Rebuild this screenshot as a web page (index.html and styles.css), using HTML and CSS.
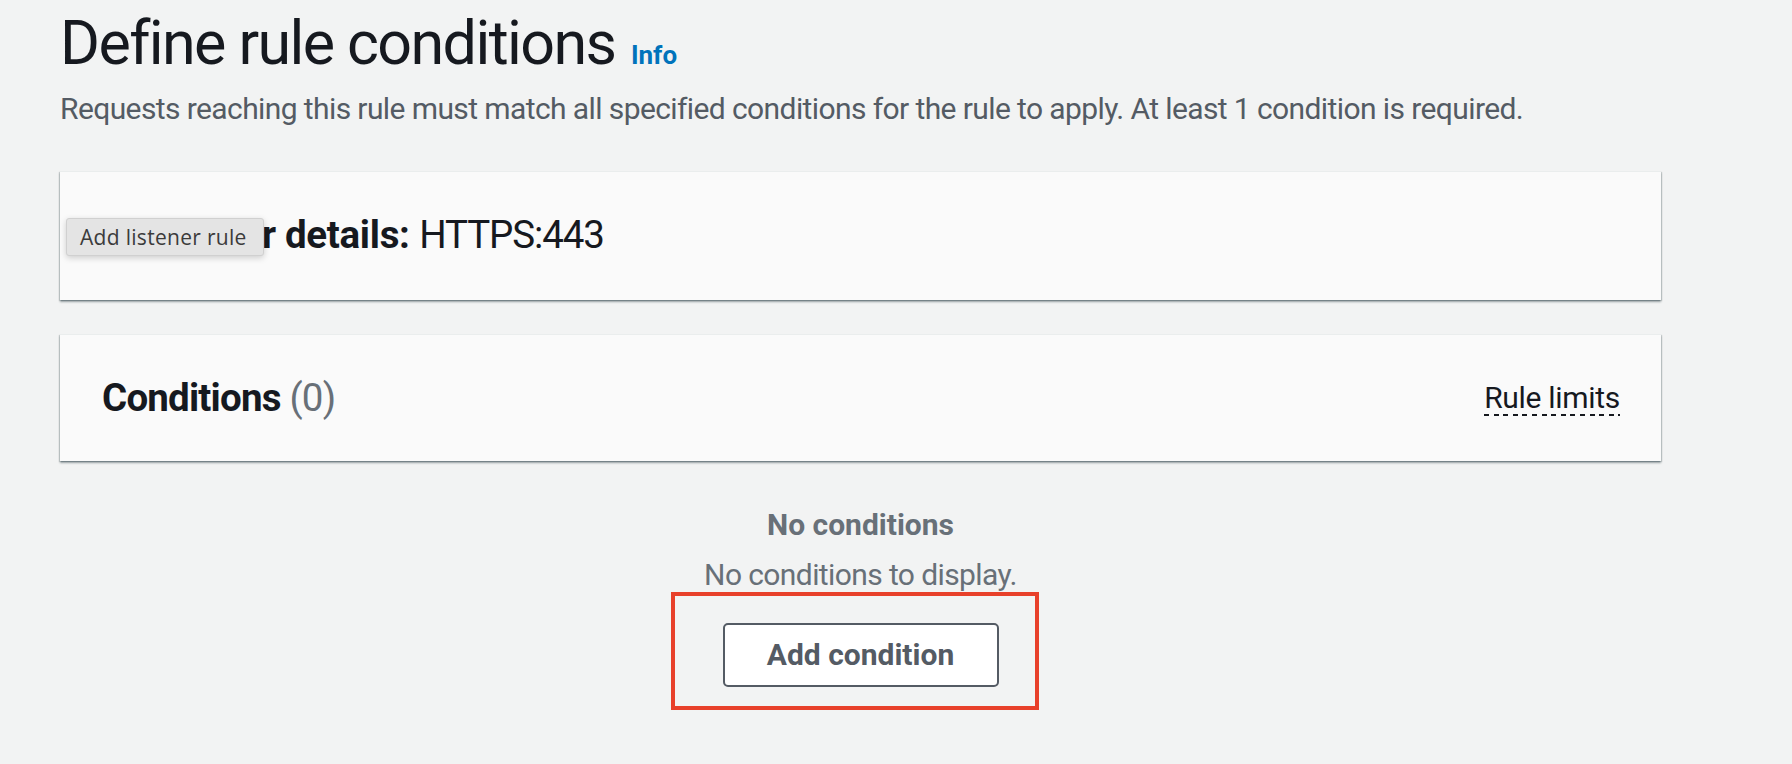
FILE: index.html
```html
<!DOCTYPE html>
<html lang="en">
<head>
<meta charset="utf-8">
<title>Define rule conditions</title>
<link rel="stylesheet" href="styles.css">
</head>
<body>
<main class="page">
  <header class="page-header">
    <h1 class="page-title">Define rule conditions <a class="info-link" href="#">Info</a></h1>
    <p class="page-desc">Requests reaching this rule must match all specified conditions for the rule to apply. At least 1 condition is required.</p>
  </header>

  <section class="card card-listener">
    <h2 class="card-title listener-title"><strong>Listener details:</strong> <span class="value">HTTPS:443</span></h2>
    <div class="tooltip">Add listener rule</div>
  </section>

  <section class="card card-conditions">
    <h2 class="card-title conditions-title"><strong>Conditions</strong> <span class="count">(0)</span></h2>
    <a class="rule-limits" href="#">Rule limits</a>
  </section>

  <div class="empty">
    <div class="empty-title">No conditions</div>
    <div class="empty-text">No conditions to display.</div>
    <div class="empty-action">
      <button class="btn" type="button">Add condition</button>
      <div class="highlight"></div>
    </div>
  </div>
</main>
</body>
</html>
```

FILE: styles.css
```css
* { box-sizing: border-box; }

html, body {
  margin: 0;
  padding: 0;
  background: #f2f3f3;
}

body {
  font-family: Roboto, "Liberation Sans", sans-serif;
  color: #16191f;
  min-height: 100vh;
}

.page {
  padding: 9px 0 60px 60px;
  width: 1661px;
}

.page-title {
  margin: 0;
  font-size: 61px;
  line-height: 68px;
  font-weight: 400;
  letter-spacing: -1.6px;
  color: #16191f;
}

.info-link {
  font-size: 26px;
  font-weight: 700;
  letter-spacing: 0;
  color: #0073bb;
  text-decoration: none;
  margin-left: 2px;
}

.page-desc {
  margin: 0;
  font-size: 30px;
  line-height: 40px;
  letter-spacing: -0.6px;
  color: #545b64;
}

.card {
  position: relative;
  background: #fafafa;
  border-top: 1px solid #eaeded;
  box-shadow: 0 2px 2px rgba(0, 28, 36, 0.35), 1px 1px 1px rgba(0, 28, 36, 0.15), -1px 1px 1px rgba(0, 28, 36, 0.15);
  width: 1601px;
  display: flex;
  align-items: center;
  justify-content: space-between;
  padding: 0 41px 0 42px;
}

.card-listener {
  margin-top: 42px;
  height: 129px;
  padding-bottom: 2px;
}

.card-conditions {
  margin-top: 34px;
  height: 127px;
}

.card-title {
  margin: 0;
  font-size: 38.5px;
  line-height: 48px;
  font-weight: 400;
  color: #16191f;
}

.listener-title { margin-left: 35px; }

.listener-title strong { letter-spacing: -0.3px; }

.listener-title .value { letter-spacing: -1.1px; }

.conditions-title { letter-spacing: -0.8px; }

.card-title strong { font-weight: 700; }

.count { color: #687078; font-weight: 400; }

.rule-limits {
  font-size: 30px;
  line-height: 36px;
  letter-spacing: -0.3px;
  color: #16191f;
  text-decoration: none;
  background-image: repeating-linear-gradient(to right, #16191f 0 5px, transparent 5px 9.6px);
  background-size: 100% 2px;
  background-repeat: no-repeat;
  background-position: left bottom;
}

.tooltip {
  position: absolute;
  left: 6px;
  top: 46px;
  width: 198px;
  height: 38px;
  background: #e4e4e4;
  border: 1px solid #d0d0d0;
  border-radius: 3px;
  box-shadow: 0 2px 6px rgba(0, 0, 0, 0.18);
  font-family: "Open Sans", Roboto, sans-serif;
  font-size: 21px;
  line-height: 36px;
  letter-spacing: 0.3px;
  color: #3b3b3b;
  padding-left: 13px;
  white-space: nowrap;
}

.empty {
  width: 1601px;
  display: flex;
  flex-direction: column;
  align-items: center;
  padding-top: 44px;
  color: #687078;
}

.empty-title {
  font-size: 30px;
  line-height: 40px;
  font-weight: 700;
}

.empty-text {
  margin-top: 10px;
  font-size: 30px;
  line-height: 40px;
  letter-spacing: -0.6px;
}

.empty-action {
  position: relative;
  margin-top: 28px;
}

.btn {
  display: block;
  width: 276px;
  height: 64px;
  background: #ffffff;
  border: 2px solid #545b64;
  border-radius: 5px;
  font-family: Roboto, "Liberation Sans", sans-serif;
  font-size: 30px;
  font-weight: 700;
  color: #545b64;
  padding: 0;
  line-height: 40px;
}

.highlight {
  position: absolute;
  left: -52px;
  top: -31px;
  width: 368px;
  height: 118px;
  border: 4px solid #e8402a;
  pointer-events: none;
}
```
